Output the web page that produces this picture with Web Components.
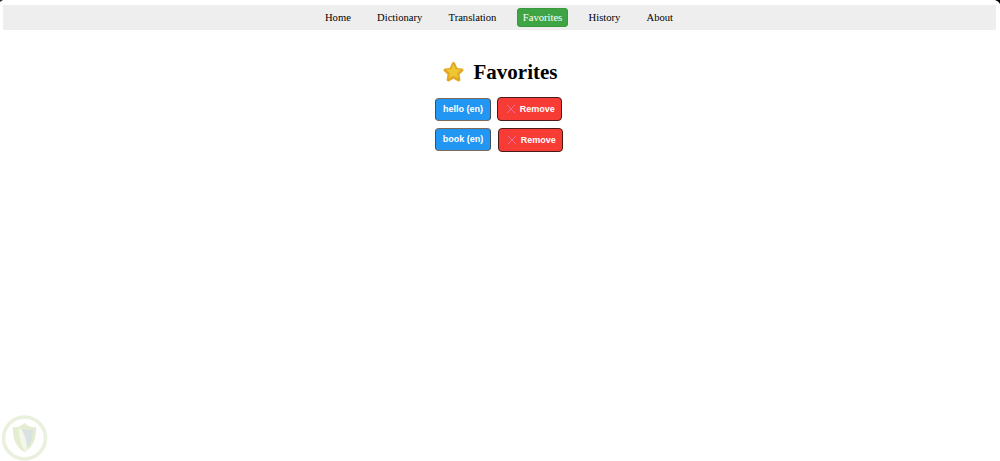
<!DOCTYPE html>
<html><head><meta charset="utf-8"><title>Favorites</title>
<style>
html,body{margin:0;padding:0;background:#fff;height:100%;overflow:hidden}
body{font-family:"Liberation Serif",serif;color:#000}
</style></head><body>
<app-page>
  <top-nav>
    <nav-link>Home</nav-link><nav-link>Dictionary</nav-link><nav-link>Translation</nav-link><nav-link active>Favorites</nav-link><nav-link>History</nav-link><nav-link>About</nav-link>
  </top-nav>
  <page-title>Favorites</page-title>
  <fav-row word="hello (en)"></fav-row>
  <fav-row word="book (en)" wide></fav-row>
  <corner-badge></corner-badge>
  <window-corners></window-corners>
</app-page>
<script>
function def(name,html){
  customElements.define(name,class extends HTMLElement{
    constructor(){super();this.attachShadow({mode:'open'}).innerHTML=html;}
  });
}
def('app-page',`<style>:host{display:flex;flex-direction:column;align-items:center;height:461px;padding:5px 4px 0 3px;box-sizing:border-box;position:relative}</style><slot></slot>`);
def('top-nav',`<style>:host{display:flex;justify-content:center;align-items:center;gap:14.2px;align-self:stretch;height:25px;background:#eee;padding-right:1px;box-sizing:border-box}</style><slot></slot>`);
def('nav-link',`<style>
:host{display:block;font:10.6px/15px "Liberation Serif",serif;padding:2px 6px;border-radius:4px;color:#000}
:host([active]){background:#3fa544;color:#fff;box-shadow:inset 0 0 0 1px #389a3d;padding:2px 6.2px}
</style><slot></slot>`);
def('page-title',`<style>
:host{display:flex;align-items:center;gap:9px;margin-top:29px;height:27px;font:bold 21px/27px "Liberation Serif",serif}
svg{width:23px;height:22px;display:block;margin-bottom:1px}
</style><svg viewBox="0 0 24 24"><path d="M12 1.200c.9 0 1.500.6 1.900 1.500l2.200 4.800 5.100.6c1.900.3 2.400 2 1.100 3.200l-3.800 3.500 1 5.200c.3 1.700-1.200 2.800-2.800 2l-4.700-2.700-4.700 2.700c-1.600.8-3.100-.3-2.800-2l1-5.200-3.800-3.500c-1.300-1.200-.8-2.900 1.100-3.200l5.100-.6 2.200-4.800c.4-.9 1-1.500 1.900-1.500z" fill="#e2a824"/><path d="M12 3.500l2.500 5.300 5.600.8-4.100 3.800 1 5.500-5-2.800-5 2.800 1-5.500-4.100-3.800 5.600-.8z" fill="#eec733"/></svg><span><slot></slot></span>`);
customElements.define('fav-row',class extends HTMLElement{
  constructor(){super();const r=this.attachShadow({mode:'open'});
  r.innerHTML=`<style>
  :host{display:flex;align-items:flex-end;gap:6px;margin:7px 2px 0 0;height:24px}
  :host(:first-of-type){margin-top:11px}
  :host([wide]){gap:7px;margin-right:1px;align-items:flex-start}
  </style><word-btn></word-btn><remove-btn></remove-btn>`;
  r.querySelector('word-btn').textContent=this.getAttribute('word')||'';}
});
def('word-btn',`<style>
:host{display:block;width:56px;height:23px;box-sizing:border-box;background:#2196f3;border:1px solid #3c4f60;border-top-color:#7d6a58;border-bottom-color:#7d6a58;border-radius:4px;color:#fff;font:bold 9px/20px "Liberation Sans",sans-serif;text-align:center}
</style><slot></slot>`);
def('remove-btn',`<style>
:host{display:flex;align-items:center;justify-content:center;gap:3.5px;width:65px;height:24px;box-sizing:border-box;background:#f73c36;border:1px solid #4a1a18;border-radius:4px;color:#fff;font:bold 9px/22px "Liberation Sans",sans-serif;padding-left:2px}
svg{width:10px;height:10px;display:block}
</style><svg viewBox="0 0 10 10"><path d="M1 1l8 8M9 1l-8 8" stroke="#f56a9c" stroke-width="1" fill="none"/></svg><span>Remove</span>`);
def('corner-badge',`<style>
:host{position:absolute;left:0;top:414px;width:48px;height:47px}
svg{width:48px;height:47px;display:block;filter:blur(.5px)}
</style><svg viewBox="0 0 48 47"><circle cx="24.500" cy="24" r="21" fill="#fff" stroke="#e9f0de" stroke-width="3.500"/><path d="M13 13c4.500 1 8-1 11.500-4 3.500 3 7 5 11.500 4 .5 11-2.500 20-11.500 25C15.500 33 12.500 24 13 13z" fill="#e3edcf"/><path d="M20 13.500c5 5 8.500 12 8 20-1 1.500-2 2.500-3.500 3.500-2.500-5-5-11-6-21z" fill="#f3f7ea"/><path d="M21 14c5 3 10 2 12 1 0 8-2 15-6 19.500 0-7-2.500-14-6-20.500z" fill="#d8e2e2"/></svg>`);
def('window-corners',`<style>
:host{position:absolute;inset:0;pointer-events:none}
svg{position:absolute;top:0;display:block}
.l{left:0}.r{right:0}
</style><svg class="l" width="3" height="2" viewBox="0 0 3 2"><path d="M0 0h3L0 2z" fill="#333"/></svg><svg class="r" width="5" height="4" viewBox="0 0 5 4"><path d="M0 0h5v4C4 2 2.500 .8 0 0z" fill="#000"/></svg>`);
</script>
</body></html>
